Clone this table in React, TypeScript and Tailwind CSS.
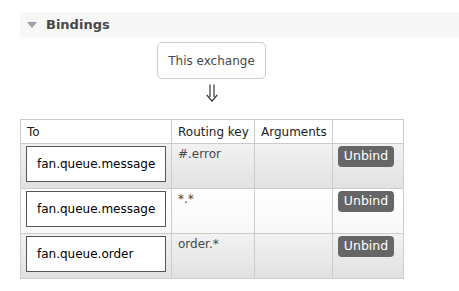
import React from "react";

const rows = [
  { to: "fan.queue.message", key: "#.error", odd: true },
  { to: "fan.queue.message", key: "*.*", odd: false },
  { to: "fan.queue.order", key: "order.*", odd: true },
];

export default function App() {
  return (
    <div
      className="w-[459px] h-[291px] bg-white pt-[12px] text-[12px] text-[#484848]"
      style={{ fontFamily: '"DejaVu Sans", Verdana, sans-serif' }}
    >
      <div className="ml-[20px] h-[25px] bg-[#f7f7f7] flex items-center pl-[7px]">
        <svg width="10" height="6" viewBox="0 0 10 6" className="mr-[9px]">
          <polygon points="0,0 10,0 5,6" fill="#a0a0a0" />
        </svg>
        <span className="font-bold text-[13px] text-[#484848]">Bindings</span>
      </div>
      <div className="ml-[20px] w-[383px] flex flex-col items-center">
        <div className="mt-[5px] w-[109px] h-[37px] border border-[#cccccc] rounded-[5px] bg-white flex items-center justify-center">
          This exchange
        </div>
        <div className="h-[40px] pt-[5px]">
          <svg width="12" height="18" viewBox="0 0 12 18" fill="none" stroke="#333" strokeWidth="1.2">
            <path d="M4 0.5 V13" />
            <path d="M8 0.5 V13" />
            <path d="M0.8 11 L6 17.2 L11.2 11" />
          </svg>
        </div>
      </div>
      <table className="ml-[20px] border-collapse w-[383px] table-fixed">
        <colgroup>
          <col className="w-[151px]" />
          <col className="w-[83px]" />
          <col className="w-[78px]" />
          <col className="w-[71px]" />
        </colgroup>
        <thead>
          <tr className="h-[24px] bg-white">
            <th className="border border-[#cccccc] text-left font-normal px-[6px] text-[#222] whitespace-nowrap">To</th>
            <th className="border border-[#cccccc] text-left font-normal pl-[6px] pr-0 text-[#222] whitespace-nowrap overflow-hidden">Routing key</th>
            <th className="border border-[#cccccc] text-left font-normal pl-[6px] pr-0 text-[#222] whitespace-nowrap">Arguments</th>
            <th className="border border-[#cccccc]"></th>
          </tr>
        </thead>
        <tbody>
          {rows.map((r, i) => (
            <tr
              key={i}
              className={
                "h-[45px] " +
                (r.odd
                  ? "bg-gradient-to-b from-[#f2f2f2] to-[#e1e1e1]"
                  : "bg-gradient-to-b from-[#ffffff] to-[#f7f7f7]")
              }
            >
              <td className="border border-[#cccccc] align-top pl-[5px] pt-[2px] pb-0">
                <div className="w-[140px] h-[36px] border border-[#555] bg-white flex items-center pl-[10px] text-black">
                  {r.to}
                </div>
              </td>
              <td className="border border-[#cccccc] align-top pl-[6px] pt-[3px] leading-[15px]">{r.key}</td>
              <td className="border border-[#cccccc] align-top"></td>
              <td className="border border-[#cccccc] align-top pl-[5px] pt-[2px]">
                <div className="w-[56px] h-[21px] rounded-[4px] bg-[#666666] text-white text-[12.5px] flex items-center justify-center">
                  Unbind
                </div>
              </td>
            </tr>
          ))}
        </tbody>
      </table>
    </div>
  );
}
